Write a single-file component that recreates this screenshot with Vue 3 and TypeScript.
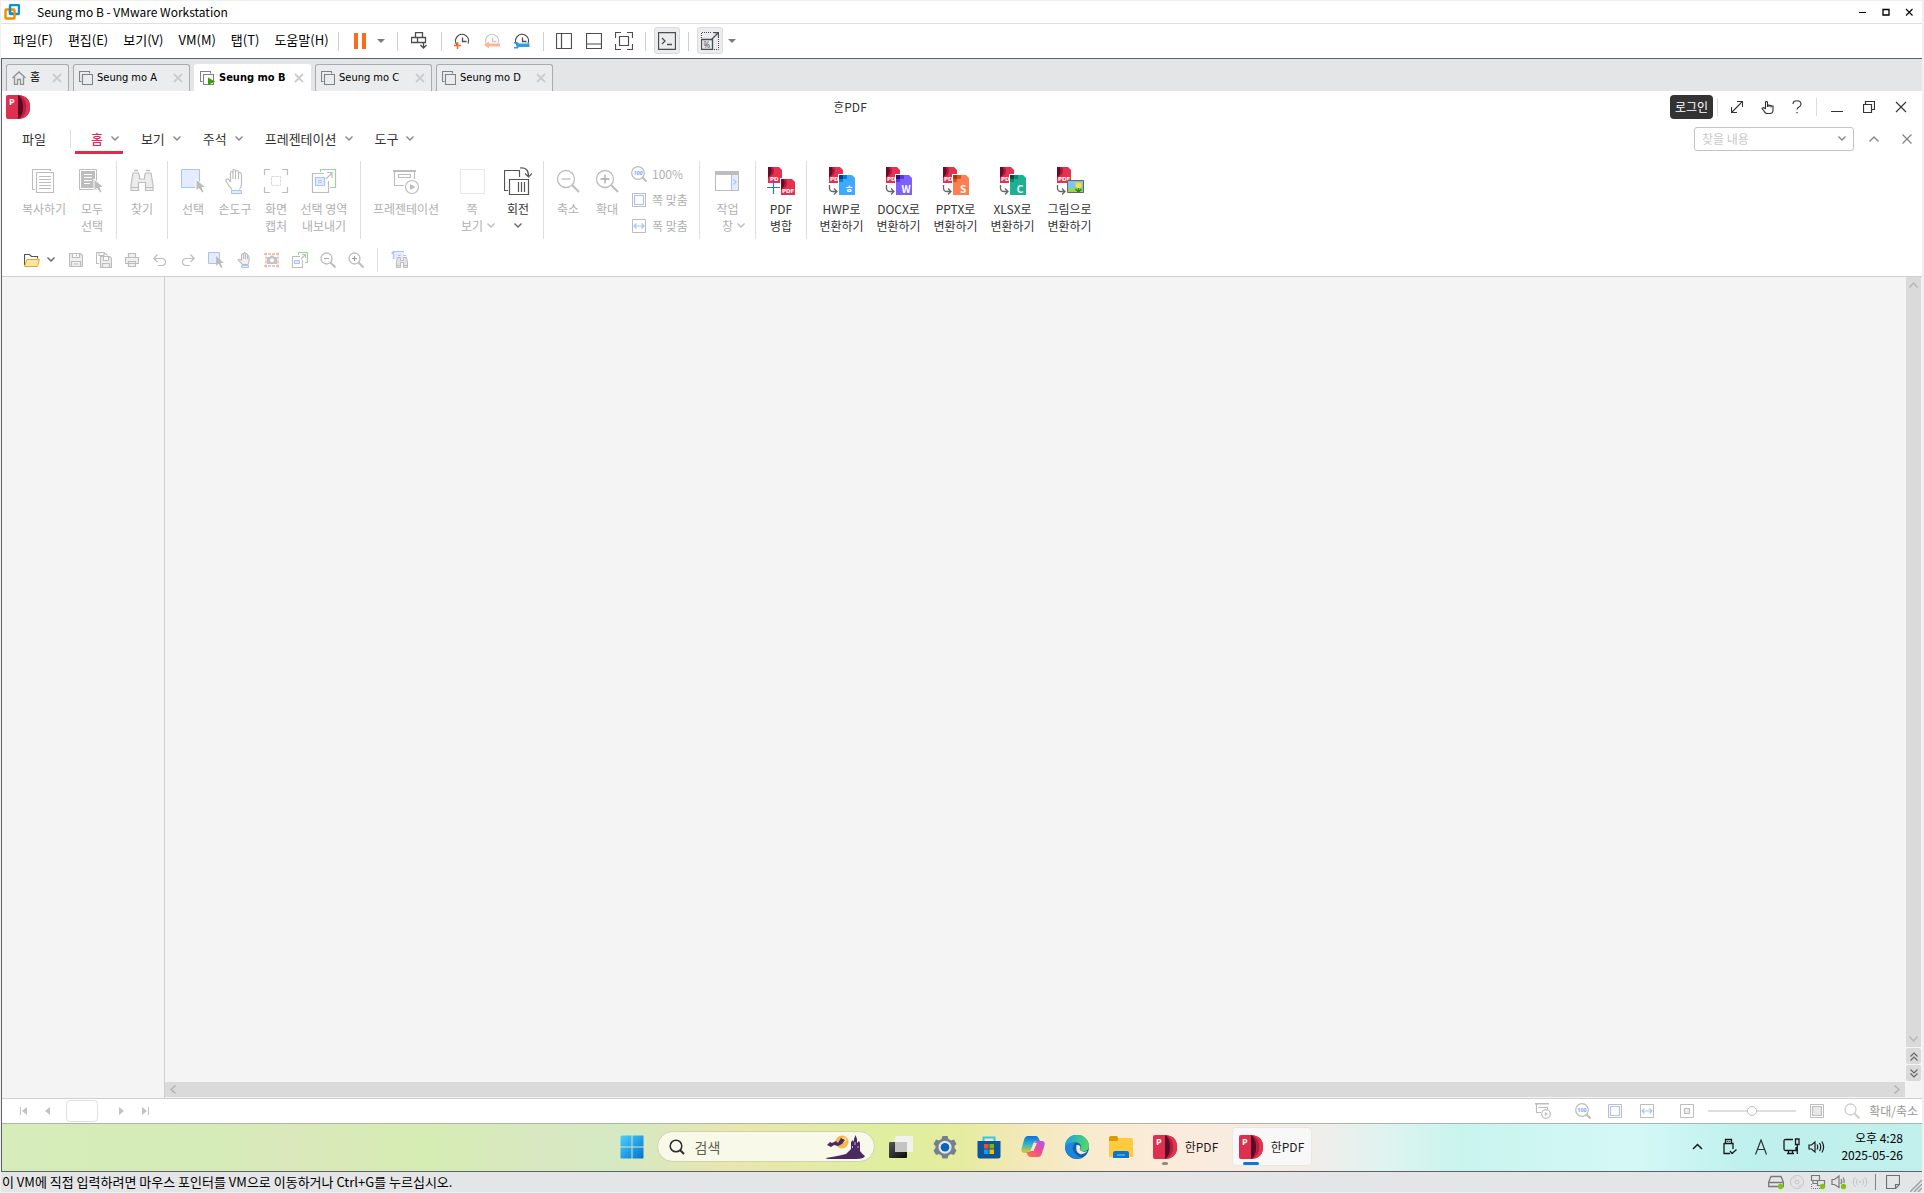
<script setup lang="ts">
import { h } from 'vue'

interface Glyph {
  w: number
  h: number
  body: string
}

interface Tool {
  icon: string
  lines: string[]
  width: number
  active?: boolean
  caret?: boolean
}

const cursor = (x: number, y: number) =>
  `<path transform="translate(${x} ${y})" fill="#bdbdbd" stroke="#fff" d="M0 0V12L3 9.500L6 14L8 13L6 8.500H10Z"/>`

const pdfSheet = (x: number, y: number, tx: number, label = 'PDF') =>
  `<g transform="translate(${x} ${y})"><path fill="#e6304f" d="M0 0H11L14 3V16H0Z"/><path fill="#6b0b27" d="M0 0H3Q6 6 0 11Z"/><path fill="#b01b3c" d="M3 0H5Q8 7 2 10Q5 5 3 0Z"/><text x="${tx}" y="14" font-size="5.500" font-weight="700" font-family="DejaVu Sans" fill="#fff">${label}</text></g>`

const convertIcon = (fill: string, dark: string, mid: string, letter: string) =>
  `${pdfSheet(1, 0, 1)}<path d="M1.500 18V21Q1.500 24.500 5 24.500H9M6 21.500L9 24.500L6 27.500" fill="none" stroke="#666" stroke-width="1.300"/><path fill="#fff" d="M10 7H24L28 11V28H10Z"/><path fill="${fill}" d="M11 8H24L27 11V28H11Z"/><path fill="${dark}" d="M11 8H15V12H11Z"/><path fill="${mid}" d="M15 8H19V12H15ZM11 12H15V15H11Z"/><text x="21" y="26" text-anchor="middle" font-size="10" font-weight="700" font-family="Noto Sans CJK KR" fill="#fff">${letter}</text>`

const pdfApp =
  '<path fill="#8f1734" d="M12 0Q24 1 24 12T12 24Z"/><path fill="#e8304f" d="M13 0Q24 1 24 12T13 24Q20 20 20 12T13 0Z"/><path fill="#b51f40" d="M13 0Q20 4 20 12T13 24Q17 19 17 12T13 0Z"/><path fill="#5d0a25" d="M12 0Q17 4 17 12T12 24Z"/><path fill="#df2f50" d="M2 0H12V24H2Q0 24 0 22V2Q0 0 2 0Z"/><text x="3" y="10" font-size="9" font-weight="700" font-family="Open Sans" fill="#fff">P</text>'

const g = (w: number, h: number, body: string): Glyph => ({ w, h, body })

const line = (stroke: string, d: string, width = 1) =>
  `<path fill="none" stroke="${stroke}" stroke-width="${width}" d="${d}"/>`

const zoomLens = (color: string, inner: string) =>
  `<circle cx="6.500" cy="6.500" r="5.500" fill="none" stroke="${color}" stroke-width="1.300"/>${line(color, 'M10.500 10.500L15.500 15.500', 2)}${inner}`

const clock = (color: string) =>
  line(color, 'M3.500 12.500A6.500 6.500 0 1 1 14 10.500M8.500 4.500V8.500H12.500', 1.3)

const glyphs: Record<string, Glyph> = {
  vmware: g(16, 16, '<rect x="6" y="1" width="9" height="9" rx="1" fill="none" stroke="#0a93cf" stroke-width="2.400"/><rect x="1.500" y="5.500" width="9" height="9" rx="1" fill="none" stroke="#f38b00" stroke-width="2.400"/><path d="M6 4V9.500H9" fill="none" stroke="#0a93cf" stroke-width="2.400"/>'),
  winMin: g(12, 12, line('#000', 'M2 6.500H9')),
  winMax: g(12, 12, line('#000', 'M3 3.500H9V9H3Z', 1.3)),
  winClose: g(12, 12, line('#000', 'M3 3L9.500 9.500M9.500 3L3 9.500', 1.1)),
  caret: g(8, 4, '<path fill="#7b7b7b" d="M0 0H8L4 4Z"/>'),
  pause: g(12, 16, '<path fill="#ff6b1c" d="M0 0H4V16H0ZM8 0H12V16H8Z"/>'),
  sendKeys: g(16, 17, line('#4d4d4f', 'M4.500 .500H11.500V5.500H4.500ZM.500 5.500H6.500V10.500H.500ZM6.500 5.500H14.500V10.500H6.500ZM12.500 11V16M9.500 13L12.500 16L15.500 13', 1.3)),
  snapAdd: g(17, 16, clock('#4d4d4f') + line('#ff6b1c', 'M0 12.500H7M3.500 9V16', 1.6)),
  snapBack: g(17, 16, clock('#c9c9c9') + '<path fill="#ffb493" d="M0 12L5 8.500V10.500H16V13.500H5V15.500Z"/>'),
  snapManage: g(17, 16, clock('#4d4d4f') + '<path fill="#2b9fdd" d="M0 9H3.500L5 10.500H15.500V14H5L3.500 15.500H0V14H2.500V10.500H0Z"/>'),
  paneLeft: g(16, 16, line('#4d4d4f', 'M.500 .500H15.500V15.500H.500ZM5.500 .500V15.500', 1.2)),
  paneBottom: g(16, 16, line('#4d4d4f', 'M.500 .500H15.500V15.500H.500ZM.500 11H15.500', 1.2)),
  fullscreen: g(18, 18, line('#4d4d4f', 'M.500 6V.500H6M12 .500H17.500V6M17.500 12V17.500H12M6 17.500H.500V12M4.500 4.500H13.500V13.500H4.500Z', 1.2)),
  console: g(18, 18, line('#4d4d4f', 'M.500 .500H17.500V17.500H.500Z', 1.3) + line('#4d4d4f', 'M4 6L7 9L4 12M9 12.500H14', 1.3)),
  stretch: g(18, 18, line('#4d4d4f', 'M.500 7.500H11.500V17.500H.500ZM10 8L17 1M12 .500H17.500V6', 1.3) + '<path d="M.500 6V.500H11M17.500 7V17.500H12" fill="none" stroke="#4d4d4f" stroke-dasharray="1 1"/><text x="2.500" y="15.500" font-size="8" font-family="Noto Sans" fill="#555">%</text>'),
  home: g(14, 14, line('#8f9194', 'M.500 7L7 1L13.500 7M2.500 6V13.500H5.500V8.500H8.500V13.500H11.500V6', 1.3)),
  vm: g(14, 14, line('#808285', 'M2.500 10.500H.500V.500H10.500V2.500M3.500 3.500H13.500V13.500H3.500Z', 1.1)),
  vmOn: g(15, 14, line('#808285', 'M2.500 10.500H.500V.500H10.500V2.500M3.500 3.500H13.500V13.500H3.500Z', 1.1) + '<path fill="#3f9c10" d="M8 6.500L15 10.500L8 14Z"/>'),
  tabClose: g(10, 10, line('#cbcccd', 'M1 1L9 9M9 1L1 9', 1.8)),
  pdfApp: g(24, 24, pdfApp),
  expand: g(12, 12, line('#333', 'M1 11L11 1M6 .500H11.500V6M.500 6V11.500H6', 1.1)),
  touch: g(13, 13, line('#333', 'M4.500 8V1.500Q4.500 .500 5.500 .500T6.500 1.500V6M6.500 4H8V6M8 4.500H10V6.500M10 5H12V9Q12 12.500 9 12.500H6Q4 12.500 3 10L1 7.500L2.500 6.500L4.500 8', 1.1)),
  help: g(10, 14, line('#333', 'M1 4Q1 .700 5 .700T9 4Q9 6 7 7T5 9.500', 1.1) + '<path fill="#333" d="M4.400 12H5.600V13.200H4.400Z"/>'),
  minimize: g(12, 12, line('#333', 'M0 10.500H12')),
  restore: g(12, 12, line('#333', 'M.500 3.500H8.500V11.500H.500ZM2.500 3V.500H11.500V8.500H9', 1.2)),
  close: g(12, 12, line('#333', 'M1 1L11 11M11 1L1 11', 1.1)),
  closeGrey: g(12, 12, line('#858585', 'M1.500 1.500L10.500 10.500M10.500 1.500L1.500 10.500', 1.3)),
  down: g(8, 5, line('#858585', 'M.500 .500L4 4L7.500 .500', 1.4)),
  downLight: g(8, 5, line('#bcbcbc', 'M.500 .500L4 4L7.500 .500', 1.4)),
  downDark: g(8, 5, line('#666', 'M.500 .500L4 4L7.500 .500', 1.4)),
  up: g(10, 6, line('#858585', 'M.500 5.500L5 1L9.500 5.500', 1.4)),

  copy: g(28, 28, line('#bdbdbd', 'M5 22.500H2.500V2.500H20.500V4M6.500 5.500H23.500V25.500H6.500ZM9 9.500H21M9 12.500H21M9 15.500H21M9 18.500H21M9 21.500H21', 1.1)),
  selectAll: g(28, 28, '<path fill="#fff" stroke="#bdbdbd" d="M1.500 2.500H18.500V22.500H1.500Z"/><path fill="#bdbdbd" d="M3 4H17V21H3Z"/><path stroke="#fff" d="M6 7.500H14M6 10.500H14M6 13.500H14M6 16.500H12"/>' + cursor(16, 12)),
  find: g(28, 28, '<path fill="#ececec" stroke="#bdbdbd" stroke-width="1.200" d="M5 6H10.500L11.500 9V12H16.500V9L17.500 6H23L25 18V23.500H17.500V15.500H10.500V23.500H3V18ZM3.500 20.500H10M18 20.500H24.500"/><path stroke="#bdbdbd" stroke-width="1.500" d="M6 3.500H10M18 3.500H22"/>'),
  select: g(28, 28, '<path fill="#e5ecff" stroke="#a8c2fb" d="M2.500 2.500H20.500V20.500H2.500Z"/>' + cursor(17, 12)),
  hand: g(28, 28, line('#bdbdbd', 'M9.500 15V6Q9.500 4.500 10.500 4.500T12 6V12M12 6V3.500Q12 2.500 13.200 2.500T14.500 3.500V12M14.500 4.500Q15 3.500 16 3.500T17.500 5V12M17.500 6.500Q18 5.500 19 5.500T20.500 7.500V17Q20.500 20 18.500 22.500M9.500 15L7.500 12.500Q6 11.500 5 12.500Q4.500 13.500 5.500 15L8.500 19.500L11 22.500', 1.2) + '<path fill="#e5ecff" stroke="#a8c2fb" d="M10.500 23.500H20.500V26.500H10.500Z"/>'),
  capture: g(28, 28, line('#bdbdbd', 'M2.500 8V2.500H8M20 2.500H25.500V8M25.500 20V25.500H20M8 25.500H2.500V20', 1.2) + '<path fill="none" stroke="#d8d8d8" stroke-dasharray="3 1" d="M9.500 9.500H18.500V18.500H9.500Z"/>'),
  exportArea: g(28, 28, line('#9fd09f', 'M10.500 5V2.500H25.500V20.500H20', 1.2) + line('#bdbdbd', 'M14 6.500H2.500V25.500H18.500V14M16 12L21.500 6.500M17 5.500H22V11', 1.2) + '<path fill="#e5ecff" stroke="#a8c2fb" stroke-width="1.200" d="M5.500 10.500H14.500V18.500H5.500Z"/><path stroke="#a8c2fb" d="M8 13.500H12M8 15.500H12"/>'),
  present: g(28, 28, '<path fill="#bdbdbd" d="M1 3H24V5H1Z"/>' + line('#bdbdbd', 'M2.500 5V18.500H12M22.500 5V12M6.500 7.500H18.500V10.500H6.500Z', 1.2) + '<circle cx="20" cy="20" r="6.500" fill="#fff" stroke="#bdbdbd" stroke-width="1.200"/><path fill="#bdbdbd" d="M18 17L23.500 20L18 23Z"/>'),
  page: g(28, 28, '<path fill="none" stroke="#cfcfcf" stroke-dasharray="1 1" d="M2.500 2.500H26.500V26.500H2.500Z"/>'),
  rotate: g(28, 28, line('#555', 'M4 23.500H.500V3.500H15.500V10M5.500 12.500H24.500V27.500H5.500ZM14.500 15V25M17.500 15V25M20.500 15V25M16 1Q24.500 0 24.500 9M21 6.500L24.500 10L28 6.500', 1.2)),
  zoomOut: g(28, 28, '<circle cx="12" cy="12" r="8.500" fill="none" stroke="#bdbdbd" stroke-width="1.300"/>' + line('#bdbdbd', 'M7.500 12H16.500', 1.3) + line('#bdbdbd', 'M18 18L25 25', 2)),
  zoomIn: g(28, 28, '<circle cx="12" cy="12" r="8.500" fill="none" stroke="#bdbdbd" stroke-width="1.300"/>' + line('#aaa', 'M7.500 12H16.500M12 7.500V16.500', 1.3) + line('#bdbdbd', 'M18 18L25 25', 2)),
  taskPane: g(28, 28, '<path fill="#e5ecff" d="M18 8H25V23H18Z"/><path fill="#bdbdbd" d="M1 4H25V8H1Z"/>' + line('#bdbdbd', 'M1.500 8V23.500H24.500V8', 1.1) + line('#a8c2fb', 'M17.500 8V23M19.500 12.500L22 15L19.500 17.500', 1.1)),
  merge: g(28, 28, pdfSheet(1, 0, 2, 'PD') + '<path fill="#fff" d="M13 11H26L29 14V28H13Z"/>' + pdfSheet(14, 12, 1) + line('#2a6df0', 'M0 20.500H13M6.500 14V27', 1.2)),
  toHwp: g(28, 28, convertIcon('#3fa9ff', '#00407f', '#0a7be0', 'ㅎ')),
  toDocx: g(28, 28, convertIcon('#7d5fff', '#26117d', '#5a38e0', 'W')),
  toPptx: g(28, 28, convertIcon('#ff7f50', '#a33a10', '#d9551f', 'S')),
  toXlsx: g(28, 28, convertIcon('#1eb092', '#024a3c', '#0b8a70', 'C')),
  toImage: g(28, 28, pdfSheet(1, 0, 1) + line('#666', 'M1.500 18V21Q1.500 24.500 5 24.500H9M6 21.500L9 24.500L6 27.500', 1.3) + '<path fill="#7cc4f2" stroke="#666" d="M11.500 13.500H27.500V25.500H11.500Z"/><path fill="#9bd15a" d="M12 21H27V25H12Z"/><path fill="#ffe22e" d="M19.500 15L21 16.500L22.500 15L24 16.500L25.500 15V18.500Q25.500 21 22.500 21T19.500 18.500Z"/><path stroke="#1d8a1d" stroke-width="1.300" fill="none" d="M22.500 21V25M19.500 22L22.500 25L25.500 22"/>'),

  zoom100: g(16, 16, '<circle cx="7" cy="7" r="6.300" fill="none" stroke="#bdbdbd" stroke-width="1.200"/>' + line('#bdbdbd', 'M11.500 11.500L15.500 15.500', 2) + '<text x="7" y="9" text-anchor="middle" font-size="5.500" font-weight="700" font-family="Open Sans" fill="#7fa6ff">100</text>'),
  fitPage: g(14, 14, line('#bdbdbd', 'M.500 .500H13.500V13.500H.500Z') + line('#a8c2fb', 'M2.500 2.500H11.500V11.500H2.500Z', 1.2)),
  fitWidth: g(14, 14, line('#bdbdbd', 'M.500 .500H13.500V13.500H.500Z') + line('#a8c2fb', 'M2 7H12M4.500 4.500L2 7L4.500 9.500M9.500 4.500L12 7L9.500 9.500', 1.2)),

  open: g(16, 14, line('#555', 'M.500 12V1.500H5.500L7.500 3.500H13.500V5.500', 1.2) + '<path fill="#ffe4a0" stroke="#e5a823" d="M3 6.500H15.500L13.500 13.500H.500Z"/>'),
  save: g(14, 14, '<path fill="#efefef" stroke="#bdbdbd" stroke-width="1.200" d="M.500 .500H11.500L13.500 2.500V13.500H.500ZM3.500 .500V4.500H10.500V.500M2.500 13.500V8.500H11.500V13.500M5 11H9M7.500 1.500V3.500"/>'),
  saveAll: g(16, 16, line('#bdbdbd', 'M3 11.500H.500V.500H8L11.500 3.500M3 .500V3.500H8V.500', 1.1) + '<path fill="#efefef" stroke="#bdbdbd" stroke-width="1.200" d="M4.500 4.500H13.500L15.500 6.500V15.500H4.500ZM7.500 4.500V8.500H12.500V4.500M6.500 15.500V11.500H13.500V15.500"/>'),
  print: g(14, 14, '<path fill="#efefef" stroke="#bdbdbd" stroke-width="1.200" d="M.500 4.500H13.500V10.500H.500ZM3.500 4.500V.500H10.500V4.500M3.500 8.500H10.500V13.500H3.500Z"/>'),
  undo: g(14, 12, line('#bdbdbd', 'M1 4.500H8.500Q12.500 4.500 12.500 8T8.500 11.500H5M4.500 .500L.800 4.500L4.500 8', 1.2)),
  redo: g(14, 12, line('#bdbdbd', 'M13 4.500H5.500Q1.500 4.500 1.500 8T5.500 11.500H9M9.500 .500L13.200 4.500L9.500 8', 1.2)),
  selectSm: g(16, 16, '<path fill="#e5ecff" stroke="#a8c2fb" d="M.500 .500H11.500V11.500H.500Z"/><path fill="#bdbdbd" d="M8 4V14L10.500 11.500L13 16L14.500 15L12.500 11H16Z"/>'),
  handSm: g(14, 16, '<path fill="#efefef" stroke="#bdbdbd" stroke-width="1.100" d="M4.500 8V3Q5.500 1 6.500 2Q7.500 -.500 8.500 1.500Q10 1 10.500 3Q12 3 12 5V10L11 12.500H5.500L1 8Q2 6.500 4.500 8ZM6.500 2.500V7M8.500 2V7M10.500 3.500V7"/><path fill="#e5ecff" stroke="#a8c2fb" d="M4.500 13.500H11.500V15.500H4.500Z"/>'),
  camera: g(16, 16, '<path fill="none" stroke="#f2b3a6" stroke-dasharray="3 1" stroke-width="1.300" d="M2 .500V15.500M14 .500V15.500M0 2H16M0 14H16"/><path fill="#c4c4c4" d="M3 5H5.500L6.500 3.500H9.500L10.500 5H13V12H3Z"/><circle cx="8" cy="8.300" r="2" fill="#fff"/>'),
  exportSm: g(16, 16, line('#9fd09f', 'M6.500 3V.500H15.500V10.500H13', 1.2) + line('#bdbdbd', 'M8 4.500H.500V15.500H10.500V8M9 7L13 3M10 2.500H13.500V6', 1.1) + '<path fill="#e5ecff" stroke="#a8c2fb" d="M2.500 8.500H7.500V11.500H2.500Z"/>'),
  zoomOutSm: g(16, 16, zoomLens('#bdbdbd', line('#aaa', 'M4 6.500H9', 1.2))),
  zoomInSm: g(16, 16, zoomLens('#bdbdbd', line('#999', 'M4 6.500H9M6.500 4V9', 1.2))),
  findSm: g(17, 17, '<path fill="#e5ecff" d="M2 0H13V8H2Z"/>' + line('#a8c2fb', 'M.500 2.500L2.500 .500H13M2.500 0V8', 1.2) + '<path stroke="#bdbdbd" d="M7 4.500H9.500M12.500 4.500H15"/><path fill="#e4e4e4" stroke="#bdbdbd" d="M6.500 6.500H9.500V9.500H12.500V6.500H15.500L16.500 11V16.500H12.500V11.500H9.500V16.500H5.500V11ZM5.500 14.500H9.500M12.500 14.500H16.500"/>'),

  first: g(8, 8, '<path fill="#c2c2c2" d="M0 0H1V8H0ZM7 0V8L2 4Z"/>'),
  prev: g(6, 8, '<path fill="#c2c2c2" d="M5 0V8L0 4Z"/>'),
  next: g(6, 8, '<path fill="#c2c2c2" d="M0 0V8L5 4Z"/>'),
  last: g(8, 8, '<path fill="#c2c2c2" d="M6 0H7V8H6ZM0 0V8L5 4Z"/>'),
  presentSm: g(16, 16, '<path fill="#bdbdbd" d="M0 0H14V1.500H0Z"/>' + line('#bdbdbd', 'M1.500 1V9.500H6M3.500 4.500H12.500V6', 1.2) + '<circle cx="11" cy="11" r="4.300" fill="#fff" stroke="#bdbdbd" stroke-width="1.200"/><path fill="#bdbdbd" d="M9.800 9L13 11L9.800 13Z"/>'),
  pageSmall: g(14, 14, line('#bdbdbd', 'M.500 .500H13.500V13.500H.500Z') + '<path fill="#efefef" stroke="#bdbdbd" stroke-width="1.200" d="M4.500 4.500H9.500V9.500H4.500Z"/>'),
  pageLarge: g(14, 14, line('#bdbdbd', 'M.500 .500H13.500V13.500H.500Z') + '<path fill="#e8e8e8" stroke="#bdbdbd" stroke-width="1.200" d="M2.500 2.500H11.500V11.500H2.500Z"/>'),
  lens: g(16, 16, zoomLens('#cfcfcf', '')),
  chevUp: g(9, 6, line('#b5b5b5', 'M.500 5.500L4.500 1L8.500 5.500', 1.3)),
  chevDown: g(9, 6, line('#b5b5b5', 'M.500 .500L4.500 5L8.500 .500', 1.3)),
  chevLeft: g(6, 9, line('#b0b0b0', 'M5.500 .500L1 4.500L5.500 8.500', 1.3)),
  chevRight: g(6, 9, line('#b0b0b0', 'M.500 .500L5 4.500L.500 8.500', 1.3)),
  dblUp: g(8, 9, line('#666', 'M.500 4.500L4 1L7.500 4.500M.500 8.500L4 5L7.500 8.500', 1.2)),
  dblDown: g(8, 9, line('#666', 'M.500 .500L4 4L7.500 .500M.500 4.500L4 8L7.500 4.500', 1.2)),

  windows: g(24, 24, '<defs><linearGradient id="wg" x1="0" y1="0" x2="1" y2="1"><stop offset="0" stop-color="#4cd0fb"/><stop offset="1" stop-color="#0073d1"/></linearGradient></defs><path fill="url(#wg)" d="M1.500 .500H11.500V11.500H.500V1.500ZM12.500 .500H23L23.500 1V11.500H12.500ZM.500 12.500H11.500V23.500H1L.500 23ZM12.500 12.500H23.500V23L23 23.500H12.500Z"/>'),
  search: g(16, 16, '<circle cx="7" cy="7" r="5.800" fill="none" stroke="#2b2b2b" stroke-width="1.500"/><path d="M11 11L15 15" stroke="#2b2b2b" stroke-width="2"/>'),
  castle: g(40, 24, '<circle cx="16" cy="7" r="6.500" fill="#f7b64a"/><circle cx="18" cy="5" r="2.500" fill="#ffe08a"/><path fill="#4b2a63" d="M1 10L4 7L6 8L10 6L12 8L15 3L19 5L16 9L12 11L8 10L5 12ZM0 23Q12 21 20 19Q24 15 25 14V7L27 5L28 7V4L29.500 0L31 4V8L33 6L34 8V16Q37 20 39 21Q38 24 30 24H4Q0 24 0 23Z"/><path fill="#c9a6d8" d="M28.500 7H29.500V10H28.500ZM26 11H27V13H26ZM31.500 11H32.500V13H31.500Z"/>'),
  taskView: g(24, 22, '<defs><linearGradient id="tv" x1="0" y1="0" x2="1" y2="1"><stop offset="0" stop-color="#555"/><stop offset="1" stop-color="#0b0b0b"/></linearGradient></defs><rect y="6" width="18" height="16" rx="1" fill="url(#tv)"/><rect x="6" width="18" height="16" rx="1" fill="#f1f1f1" opacity=".95"/><path fill="#c4c4c4" d="M6 6H18V16H6Z"/>'),
  settings: g(24, 24, '<path fill="#74808c" d="M9.500 1H14.500L15.500 4L18 5.500L21 4.500L23.500 9L21.500 11V13L23.500 15.500L21 20L18 19L15.500 20.500L14.500 23.500H9.500L8.500 20.500L6 19L3 20L.500 15.500L2.500 13V11L.500 9L3 4.500L6 5.500L8.500 4Z"/><circle cx="12" cy="12.200" r="6.500" fill="#e3e8ec"/><circle cx="12" cy="12.200" r="4.300" fill="#0a63bd"/>'),
  store: g(24, 24, '<path d="M6.500 7V2.500H17.500V7" fill="none" stroke="#36c3f2" stroke-width="2"/><path fill="#0f559b" d="M.500 6H23.500V21Q23.500 23.500 21 23.500H3Q.500 23.500 .500 21Z"/><path fill="#f25022" d="M7 9H11.500V13.500H7Z"/><path fill="#7fba00" d="M12.500 9H17V13.500H12.500Z"/><path fill="#00a4ef" d="M7 14.500H11.500V19H7Z"/><path fill="#ffb900" d="M12.500 14.500H17V19H12.500Z"/>'),
  copilot: g(24, 24, '<defs><linearGradient id="ca" x1="0" y1="0" x2="0" y2="1"><stop offset="0" stop-color="#0d6fe0"/><stop offset=".5" stop-color="#2fb7c9"/><stop offset="1" stop-color="#f2c81c"/></linearGradient><linearGradient id="cb" x1="1" y1="0" x2="0" y2="1"><stop offset="0" stop-color="#a855f7"/><stop offset=".5" stop-color="#ec4f8f"/><stop offset="1" stop-color="#ff7a3c"/></linearGradient></defs><path fill="url(#ca)" d="M7 1H15Q17 1 18 4L19 6H15Q13 6 12 9L10 15Q9 18 7 18H3Q-1 18 1 12L3 5Q4 1 7 1Z"/><path fill="url(#cb)" d="M17 22H9Q7 22 6 19L5.500 17H8Q10 17 11 14L13 8Q14 6 16 6H21Q25 6 23 12L21 18Q20 22 17 22Z"/><path fill="#f5ead0" d="M13 8H16L12.500 16H9.500Z"/>'),
  edge: g(24, 24, '<defs><linearGradient id="ea" x1="0" y1="0" x2="1" y2=".3"><stop offset="0" stop-color="#1a9be6"/><stop offset="1" stop-color="#4fd86b"/></linearGradient></defs><circle cx="12" cy="12" r="12" fill="#0c60b5"/><path fill="url(#ea)" d="M0 12A12 12 0 0 1 24 11Q24 16 19 16Q15 16 15 14Q17 12 15 9Q12 6 7 8Q2 10 0 12Z"/><path fill="#1d86d8" d="M0 12Q3 6 10 8Q7 11 8 15Q10 21 17 22.500Q12 25 6 22Q0 18 0 12Z"/><path fill="#f7e9d4" d="M11.500 10Q15 9.500 15.500 12Q14 14 15.500 15.500Q18 17.500 22.500 16Q19 20 15 19Q10 17 11.500 10Z"/>'),
  explorer: g(24, 22, '<path fill="#d99c09" d="M0 2Q0 0 2 0H8L10 3V6H0Z"/><path fill="#ffcb3d" d="M0 5H8L10 2H22Q24 2 24 4V21H0Z"/><path fill="#0f74c9" d="M4 22V17Q4 15 6 15H18Q20 15 20 17V22Z"/><path fill="#3aa0e8" d="M8 18H16V20H8Z"/>'),
  trayUp: g(11, 7, line('#1a1a1a', 'M1 6L5.500 1.500L10 6', 1.5)),
  usb: g(14, 17, line('#1a1a1a', 'M2.500 5V1.500H8.500V5M1 5.500H10V11M1 5V15.500H7M4.500 3V3.800M6.500 3V3.800M7 13L9 15.500L13.500 11.500', 1.3)),
  ime: g(14, 16, line('#333', 'M1.500 15.500L7 1L12.500 15.500M3.500 10.500H10.500', 1.2)),
  network: g(17, 17, line('#1a1a1a', 'M10 1.500H2.500Q1 1.500 1 3V11Q1 12.500 2.500 12.500H13V9M4 15.500H11M5.500 12.500V15.500M9.500 12.500V15.500M12.500 1H16V6.500H12.500ZM14.300 6.500V16', 1.3)),
  volume: g(17, 14, line('#1a1a1a', 'M1 5H3.500L7 2V12L3.500 9H1ZM9 4.500Q10.500 7 9 9.500M11.500 3Q14 7 11.500 11M13.800 1.500Q17.500 7 13.800 12.500', 1.2)),
  disk: g(16, 16, line('#77797c', 'M.700 8L3 2.500H13L15.300 8V12.500H.700ZM.700 8.500H15.300', 1.3) + '<circle cx="12.500" cy="12.500" r="2.700" fill="#7cc516"/>'),
  disc: g(16, 16, '<circle cx="8" cy="8" r="6.500" fill="none" stroke="#c3c5c7"/><circle cx="8" cy="8" r="2" fill="none" stroke="#c3c5c7"/>' + line('#c3c5c7', 'M4 5.500Q5 4 6.500 3.500M12 10.500Q11 12 9.500 12.500')),
  nic: g(16, 16, line('#77797c', 'M1.500 1.500H9.500V6.500H1.500ZM7.500 6.500H14.500V11.500H7.500ZM3 6.500V9.500H7', 1.2) + '<path d="M1.500 10V14.500H10" fill="none" stroke="#77797c" stroke-dasharray="1 1"/><circle cx="12.500" cy="12.500" r="2.700" fill="#7cc516"/>'),
  sound: g(16, 16, line('#77797c', 'M1 5.500H3.500L8 2V13.500L3.500 10.500H1ZM10 5Q11.500 7.500 10 10M12 3.500Q14 6.500 13 9', 1.2) + '<circle cx="12.500" cy="12.500" r="2.700" fill="#7cc516"/>'),
  wireless: g(16, 16, line('#c3c5c7', 'M3.500 3Q-1 8 3.500 13M5.500 5Q3 8 5.500 11M12.500 3Q17 8 12.500 13M10.500 5Q13 8 10.500 11') + '<circle cx="8" cy="8" r="1" fill="#c3c5c7"/>'),
  note: g(14, 14, line('#6d6f72', 'M.500 .500H13.500V9.500L9.500 13.500H.500ZM9.500 13V9.500H13', 1.2)),
  grip: g(12, 12, line('#9c9ea1', 'M0 12L12 0M4 12L12 4M8 12L12 8', 1.4)),
}

const menus = ['파일(F)', '편집(E)', '보기(V)', 'VM(M)', '탭(T)', '도움말(H)']

const vmTools: string[][] = [['sendKeys'], ['snapAdd', 'snapBack', 'snapManage'], ['paneLeft', 'paneBottom', 'fullscreen']]

const vmTabs = [
  { name: 'Seung mo A', on: false },
  { name: 'Seung mo B', on: true },
  { name: 'Seung mo C', on: false },
  { name: 'Seung mo D', on: false },
]

const ribbonTabs = ['홈', '보기', '주석', '프레젠테이션', '도구']

const groupsLeft: { cls: string; tools: Tool[] }[] = [
  { cls: 'lead', tools: [{ icon: 'copy', lines: ['복사하기'], width: 48 }, { icon: 'selectAll', lines: ['모두', '선택'], width: 48 }] },
  { cls: '', tools: [{ icon: 'find', lines: ['찾기'], width: 50 }] },
  {
    cls: 'pad-area',
    tools: [
      { icon: 'select', lines: ['선택'], width: 42 },
      { icon: 'hand', lines: ['손도구'], width: 42 },
      { icon: 'capture', lines: ['화면', '캡처'], width: 40 },
      { icon: 'exportArea', lines: ['선택 영역', '내보내기'], width: 56 },
    ],
  },
  {
    cls: 'pad',
    tools: [
      { icon: 'present', lines: ['프레젠테이션'], width: 82 },
      { icon: 'page', lines: ['쪽', '보기'], width: 50, caret: true },
      { icon: 'rotate', lines: ['회전', ''], width: 42, active: true, caret: true },
    ],
  },
]

const zoomTools: Tool[] = [
  { icon: 'zoomOut', lines: ['축소'], width: 40 },
  { icon: 'zoomIn', lines: ['확대'], width: 38 },
]

const zoomRows = [
  { icon: 'zoom100', text: '100%' },
  { icon: 'fitPage', text: '쪽 맞춤' },
  { icon: 'fitWidth', text: '폭 맞춤' },
]

const groupsRight: { cls: string; tools: Tool[] }[] = [
  { cls: '', tools: [{ icon: 'taskPane', lines: ['작업', '창'], width: 55, caret: true }] },
  { cls: '', tools: [{ icon: 'merge', lines: ['PDF', '병합'], width: 50, active: true }] },
  {
    cls: 'pad last',
    tools: [
      { icon: 'toHwp', lines: ['HWP로', '변환하기'], width: 57, active: true },
      { icon: 'toDocx', lines: ['DOCX로', '변환하기'], width: 57, active: true },
      { icon: 'toPptx', lines: ['PPTX로', '변환하기'], width: 57, active: true },
      { icon: 'toXlsx', lines: ['XLSX로', '변환하기'], width: 57, active: true },
      { icon: 'toImage', lines: ['그림으로', '변환하기'], width: 57, active: true },
    ],
  },
]

const quick = ['save', 'saveAll', 'print', 'undo', 'redo', 'selectSm', 'handSm', 'camera', 'exportSm', 'zoomOutSm', 'zoomInSm']
const pinned = ['taskView', 'settings', 'store', 'copilot', 'edge', 'explorer']
const devices = ['disk', 'disc', 'nic', 'sound', 'wireless']

const Icon = (props: { name: string }) => {
  const item = glyphs[props.name]
  return h('svg', {
    width: item.w,
    height: item.h,
    viewBox: `0 0 ${item.w} ${item.h}`,
    'aria-hidden': 'true',
    innerHTML: item.body,
  })
}
Icon.props = ['name']
</script>

<template>
  <div class="host">
    <header class="host-title">
      <Icon name="vmware" />
      <h1>Seung mo B - VMware Workstation</h1>
      <button aria-label="최소화"><Icon name="winMin" /></button>
      <button aria-label="최대화"><Icon name="winMax" /></button>
      <button aria-label="닫기"><Icon name="winClose" /></button>
    </header>

    <div class="menu-bar">
      <nav class="menus">
        <button v-for="m in menus" :key="m">{{ m }}</button>
      </nav>
      <div class="vm-group power">
        <button aria-label="일시 중지"><Icon name="pause" /></button>
        <button aria-label="전원 메뉴"><Icon name="caret" /></button>
      </div>
      <div v-for="(group, i) in vmTools" :key="i" class="vm-group">
        <button v-for="t in group" :key="t" class="vm-tool" :aria-label="t"><Icon :name="t" /></button>
      </div>
      <div class="vm-group">
        <button class="pressed" aria-label="콘솔"><Icon name="console" /></button>
      </div>
      <div class="vm-group">
        <button class="pressed" aria-label="늘이기"><Icon name="stretch" /></button>
        <button class="side-caret" aria-label="늘이기 메뉴"><Icon name="caret" /></button>
      </div>
    </div>

    <main class="guest">
      <div class="vm-tabs" role="tablist">
        <div class="vm-tab home" role="tab">
          <Icon name="home" /><span>홈</span><button aria-label="탭 닫기"><Icon name="tabClose" /></button>
        </div>
        <div v-for="t in vmTabs" :key="t.name" class="vm-tab" :class="{ on: t.on }" role="tab">
          <Icon :name="t.on ? 'vmOn' : 'vm'" /><span>{{ t.name }}</span>
          <button aria-label="탭 닫기"><Icon name="tabClose" /></button>
        </div>
      </div>

      <section class="pdf">
        <div class="pdf-title">
          <Icon name="pdfApp" />
          <h2>ᄒᆞᆫPDF</h2>
          <button class="login">로그인</button>
          <span class="rule near"></span>
          <button aria-label="전체 화면"><Icon name="expand" /></button>
          <button aria-label="터치"><Icon name="touch" /></button>
          <button aria-label="도움말"><Icon name="help" /></button>
          <span class="rule far"></span>
          <button class="wide" aria-label="최소화"><Icon name="minimize" /></button>
          <button class="wide" aria-label="이전 크기"><Icon name="restore" /></button>
          <button class="wide" aria-label="닫기"><Icon name="close" /></button>
        </div>

        <div class="ribbon-tabs">
          <button class="file">파일</button>
          <button v-for="(t, i) in ribbonTabs" :key="t" class="rtab" :class="{ current: i === 0 }">
            {{ t }}<Icon name="down" />
          </button>
          <div class="find-box">
            <input type="text" placeholder="찾을 내용" aria-label="찾을 내용" />
            <button aria-label="최근 검색"><Icon name="down" /></button>
          </div>
          <button class="fold" aria-label="리본 접기"><Icon name="up" /></button>
          <button class="shut" aria-label="문서 닫기"><Icon name="closeGrey" /></button>
        </div>

        <div class="ribbon">
          <div v-for="(group, i) in groupsLeft" :key="i" class="group" :class="group.cls">
            <button v-for="t in group.tools" :key="t.icon" class="tool" :class="{ active: t.active }" :style="{ width: t.width + 'px' }">
              <Icon :name="t.icon" />
              <span v-for="(l, n) in t.lines" :key="n" :class="{ drop: t.caret && n === 1 && l }">{{ l }}<Icon v-if="t.caret && n === 1" :name="t.active ? 'downDark' : 'downLight'" /></span>
            </button>
          </div>
          <div class="group pad">
            <button v-for="t in zoomTools" :key="t.icon" class="tool" :style="{ width: t.width + 'px' }">
              <Icon :name="t.icon" />
              <span v-for="l in t.lines" :key="l">{{ l }}</span>
            </button>
            <div class="zoom-rows">
              <button v-for="r in zoomRows" :key="r.text"><i><Icon :name="r.icon" /></i>{{ r.text }}</button>
            </div>
          </div>
          <div v-for="(group, i) in groupsRight" :key="'r' + i" class="group" :class="group.cls">
            <button v-for="t in group.tools" :key="t.icon" class="tool" :class="{ active: t.active }" :style="{ width: t.width + 'px' }">
              <Icon :name="t.icon" />
              <span v-for="(l, n) in t.lines" :key="n" :class="{ drop: t.caret && n === 1 && l }">{{ l }}<Icon v-if="t.caret && n === 1" name="downLight" /></span>
            </button>
          </div>
        </div>

        <div class="quick">
          <button class="open" aria-label="열기"><Icon name="open" /></button>
          <button class="more" aria-label="최근 문서"><Icon name="downDark" /></button>
          <button v-for="q in quick" :key="q" :aria-label="q"><Icon :name="q" /></button>
          <span class="rule"></span>
          <button aria-label="고급 찾기"><Icon name="findSm" /></button>
        </div>

        <div class="work">
          <aside class="thumbs"></aside>
          <div class="doc">
            <div class="canvas"></div>
            <div class="hscroll"><Icon name="chevLeft" /><Icon name="chevRight" /></div>
          </div>
          <div class="vside">
            <div class="vscroll"><Icon name="chevUp" /><Icon name="chevDown" /></div>
            <button aria-label="이전 쪽"><Icon name="dblUp" /></button>
            <button aria-label="다음 쪽"><Icon name="dblDown" /></button>
          </div>
        </div>

        <footer class="pdf-status">
          <button aria-label="처음 쪽"><Icon name="first" /></button>
          <button aria-label="이전 쪽"><Icon name="prev" /></button>
          <input class="page-no" type="text" aria-label="쪽 번호" />
          <button aria-label="다음 쪽"><Icon name="next" /></button>
          <button aria-label="마지막 쪽"><Icon name="last" /></button>
          <div class="status-right">
            <button class="gap" aria-label="프레젠테이션"><Icon name="presentSm" /></button>
            <button aria-label="100%"><Icon name="zoom100" /></button>
            <button aria-label="쪽 맞춤"><Icon name="fitPage" /></button>
            <button class="gap" aria-label="폭 맞춤"><Icon name="fitWidth" /></button>
            <button aria-label="축소"><Icon name="pageSmall" /></button>
            <input class="slider" type="range" min="0" max="100" value="50" aria-label="배율" />
            <button aria-label="확대"><Icon name="pageLarge" /></button>
            <Icon name="lens" />
            <span>확대/축소</span>
          </div>
        </footer>
      </section>

      <div class="taskbar">
        <div class="tray-space"></div>
        <div class="apps">
          <button class="app" aria-label="시작"><Icon name="windows" /></button>
          <label class="search">
            <Icon name="search" />
            <input type="text" placeholder="검색" aria-label="검색" />
            <Icon name="castle" />
          </label>
          <button v-for="p in pinned" :key="p" class="app" :aria-label="p"><Icon :name="p" /></button>
          <button class="window"><Icon name="pdfApp" />한PDF</button>
          <button class="window focused"><Icon name="pdfApp" />한PDF</button>
        </div>
        <div class="tray">
          <button class="t1" aria-label="숨겨진 아이콘"><Icon name="trayUp" /></button>
          <button class="t2" aria-label="USB"><Icon name="usb" /></button>
          <button class="t2" aria-label="입력기"><Icon name="ime" /></button>
          <button class="t3" aria-label="네트워크"><Icon name="network" /></button>
          <button class="t3" aria-label="볼륨"><Icon name="volume" /></button>
          <time>오후 4:28<br />2025-05-26</time>
        </div>
      </div>
    </main>

    <footer class="host-status">
      <p>이 VM에 직접 입력하려면 마우스 포인터를 VM으로 이동하거나 Ctrl+G를 누르십시오.</p>
      <i v-for="d in devices" :key="d"><Icon :name="d" /></i>
      <span class="rule"></span>
      <i><Icon name="note" /></i>
      <Icon class="grip" name="grip" />
    </footer>
  </div>
</template>

<style>
body {
  margin: 0;
  background: #f0f0f0;
}
</style>

<style scoped>
.host {
  display: flex;
  flex-direction: column;
  min-height: 100vh;
  box-sizing: border-box;
  padding: 1px 2px 1px 1px;
  font: 12px/16px "Noto Sans CJK KR", sans-serif;
  color: #000;
  white-space: nowrap;
}

.host * {
  box-sizing: border-box;
}

svg {
  display: block;
  flex: none;
}

button {
  display: flex;
  align-items: center;
  justify-content: center;
  margin: 0;
  padding: 0;
  border: 0;
  background: none;
  color: inherit;
  font: inherit;
  white-space: nowrap;
}

h1,
h2,
p {
  margin: 0;
  font: inherit;
}

.rule {
  width: 1px;
  height: 18px;
  background: #dcdcdc;
}

.host-title {
  display: flex;
  align-items: center;
  height: 23px;
  padding: 0 2px 1px 3px;
  background: #fff;
  border-bottom: 1px solid #e0e0e0;
}

.host-title h1 {
  flex: 1;
  padding-left: 17px;
}

.host-title button {
  width: 23px;
}

.menu-bar {
  display: flex;
  align-items: center;
  height: 34px;
  padding-bottom: 1px;
  background: #fff;
}

.menus {
  display: flex;
  flex: 0 0 337px;
  gap: 15px;
  padding: 0 0 2px 12px;
  font-size: 13px;
}

.vm-group {
  display: flex;
  align-items: center;
  justify-content: center;
  position: relative;
  height: 26px;
  padding: 0 6px;
}

.vm-group::before {
  content: "";
  position: absolute;
  left: 0;
  top: 4px;
  width: 1px;
  height: 19px;
  background: #cfcfcf;
}

.vm-group.power {
  gap: 11px;
  padding: 0 12px 0 16px;
}

.vm-tool {
  width: 30px;
}

.power + .vm-group {
  padding: 0 7px;
}

.pressed {
  width: 26px;
  height: 27px;
  margin: 0 2px 0 3px;
  border: 1px solid #dadbdc;
  border-radius: 3px;
  background: #ebeced;
}

.side-caret {
  width: 14px;
}

.guest {
  display: flex;
  flex: 1;
  flex-direction: column;
  border: solid #606266;
  border-width: 1px 0 1px 1px;
}

.vm-tabs {
  display: flex;
  gap: 4px;
  height: 32px;
  padding: 5px 4px 0;
  background: #e4e5e7;
}

.vm-tab {
  display: flex;
  align-items: center;
  width: 117px;
  padding: 0 6px 0 5px;
  border: 1px solid #a9abae;
  border-bottom: 0;
  border-radius: 3px 3px 0 0;
  background: #ebeced;
  font: 11px/16px "DejaVu Sans Condensed", "Noto Sans CJK KR", sans-serif;
}

.vm-tab span {
  flex: 1;
  padding-left: 4px;
}

.vm-tab.home {
  width: 63px;
}

.vm-tab.on {
  border-color: #fff;
  background: #fff;
  font-weight: 700;
}

.pdf {
  display: flex;
  flex: 1;
  flex-direction: column;
  background: #fff;
  color: #333;
}

.pdf-title {
  display: flex;
  align-items: center;
  height: 32px;
  padding: 0 5px 0 4px;
}

.pdf-title h2 {
  flex: 1;
  text-align: center;
}

.pdf-title button {
  width: 30px;
}

.pdf-title .wide {
  width: 32px;
}

.pdf-title .login {
  width: 43px;
  height: 24px;
  border-radius: 4px;
  background: #333;
  color: #fff;
}

.pdf-title .near,
.pdf-title .far {
  margin: 0 4px;
}

.ribbon-tabs {
  display: flex;
  align-items: center;
  gap: 22px;
  height: 31px;
  padding: 0 9px 0 20px;
  font-size: 13px;
}

.file {
  position: relative;
  margin-right: 23px;
}

.file::after {
  content: "";
  position: absolute;
  right: -25px;
  width: 1px;
  height: 18px;
  background: #dcdcdc;
}

.rtab {
  position: relative;
  gap: 8px;
  height: 31px;
}

.rtab.current {
  color: #e5294d;
  font-weight: 500;
}

.rtab.current::after {
  content: "";
  position: absolute;
  right: -4px;
  bottom: 0;
  left: -16px;
  height: 3px;
  background: #e5294d;
}

.find-box {
  display: flex;
  width: 160px;
  height: 24px;
  margin-left: auto;
  border: 1px solid #c4c4c4;
  border-radius: 3px;
}

.find-box input {
  flex: 1;
  min-width: 0;
  padding: 0 7px;
  border: 0;
  background: none;
  font: inherit;
  font-size: 12px;
}

.find-box input::placeholder {
  color: #c9c9c9;
  opacity: 1;
}

.find-box button {
  width: 22px;
}

.fold {
  width: 10px;
  margin-left: -7px;
}

.shut {
  width: 12px;
}

.ribbon {
  display: flex;
  height: 78px;
  margin-top: 7px;
}

.group {
  display: flex;
  border-right: 1px solid #dedede;
}

.group.lead {
  padding-left: 18px;
}

.group.pad {
  padding: 0 4px;
}

.group.pad-area {
  padding: 0 8px 0 4px;
}

.group.last {
  padding-left: 6px;
  border: 0;
}

.tool {
  flex-direction: column;
  justify-content: flex-start;
  padding-top: 6px;
  color: #b0b0b0;
}

.tool > svg {
  margin-bottom: 5px;
}

.tool span {
  display: flex;
  align-items: center;
  gap: 4px;
  height: 17px;
  line-height: 17px;
}

.tool .drop {
  padding-left: 12px;
}

.tool.active {
  color: #333;
}

.zoom-rows {
  display: flex;
  flex-direction: column;
  width: 69px;
  padding-left: 5px;
  color: #b0b0b0;
}

.zoom-rows button {
  justify-content: flex-start;
  height: 26px;
}

.zoom-rows i {
  display: flex;
  justify-content: center;
  width: 16px;
  margin-right: 5px;
}

.quick {
  display: flex;
  align-items: center;
  height: 38px;
  padding: 5px 0 1px 18px;
  border-bottom: 1px solid #cfcfcf;
}

.quick button {
  width: 28px;
}

.quick .open {
  width: 24px;
}

.quick .more {
  width: 14px;
  margin-right: 4px;
}

.quick .rule {
  height: 24px;
  margin: 0 7px;
}

.work {
  display: flex;
  flex: 1;
  padding: 0 1px 1px 0;
  background: #f4f4f4;
}

.thumbs {
  width: 163px;
  margin-bottom: -1px;
  border-right: 1px solid #cfcfcf;
}

.doc {
  display: flex;
  flex: 1;
  flex-direction: column;
}

.canvas {
  flex: 1;
}

.hscroll {
  display: flex;
  align-items: center;
  justify-content: space-between;
  height: 15px;
  padding: 0 5px;
  background: #dadada;
}

.vside {
  display: flex;
  flex-direction: column;
  width: 15px;
  margin: 0 0 16px 1px;
  gap: 1px;
}

.vscroll {
  display: flex;
  flex: 1;
  flex-direction: column;
  align-items: center;
  justify-content: space-between;
  padding: 5px 0;
  background: #dadada;
}

.vside button {
  height: 16px;
  border-radius: 2px;
  background: #dadada;
}

.pdf-status {
  display: flex;
  align-items: center;
  height: 25px;
  padding: 0 4px 0 10px;
  border-top: 1px solid #cfcfcf;
  color: #999;
}

.pdf-status > button {
  width: 24px;
}

.page-no {
  width: 32px;
  height: 22px;
  margin: 0 12px 0 6px;
  padding: 0;
  border: 1px solid #e0e0e0;
  border-radius: 4px;
}

.status-right {
  display: flex;
  align-items: center;
  margin-left: auto;
}

.status-right button {
  width: 32px;
}

.status-right .gap {
  margin-right: 8px;
}

.status-right span {
  margin-left: 9px;
}

.status-right > svg {
  margin-left: 11px;
}

.slider {
  width: 88px;
  height: 12px;
  margin: 0 5px;
  appearance: none;
  background: linear-gradient(#dedede, #dedede) center / 100% 2px no-repeat;
}

.slider::-webkit-slider-thumb {
  width: 10px;
  height: 10px;
  appearance: none;
  border: 1px solid #bdbdbd;
  border-radius: 50%;
  background: #fff;
}

.taskbar {
  display: grid;
  grid-template-columns: 1fr auto 1fr;
  height: 48px;
  padding-bottom: 2px;
  border-top: 1px solid #a9b8a4;
  background: linear-gradient(
    90deg,
    #d6edbb 0%,
    #d5ecb8 11%,
    #dbe8bb 15%,
    #d5ecb3 22%,
    #d9e8c0 28%,
    #d4e9c3 32%,
    #e9e6ae 38%,
    #dfee9f 46%,
    #e6ec9f 50%,
    #f3e8b8 53%,
    #f9ebd0 57%,
    #fbebdd 62%,
    #f2ede8 68%,
    #dff3f0 72%,
    #c9f4ee 76%,
    #d4f8f6 85%,
    #bef0ed 91%,
    #c2f0ec 100%
  );
}

.apps {
  display: flex;
  align-items: center;
}

.app {
  width: 44px;
  height: 44px;
}

.search {
  display: flex;
  align-items: center;
  width: 218px;
  height: 31px;
  margin: 0 4px 0 3px;
  padding: 0 8px 0 11px;
  border: 1px solid #cfd4ae;
  border-radius: 16px;
  background: #f8f9e9;
}

.search input {
  flex: 1;
  min-width: 0;
  padding: 0 0 0 10px;
  border: 0;
  background: none;
  font: 14px/20px "Noto Sans CJK KR", sans-serif;
}

.search input::placeholder {
  color: #5d5f52;
  opacity: 1;
}

.window {
  position: relative;
  gap: 8px;
  width: 80px;
  height: 39px;
  margin: 0 3px;
  border: 1px solid transparent;
  border-radius: 4px;
  color: #1a1a1a;
}

.window::after {
  content: "";
  position: absolute;
  bottom: 0;
  left: 15px;
  width: 6px;
  height: 3px;
  border-radius: 2px;
  background: #8f8a82;
}

.window.focused {
  border-color: #e8e8e8;
  background: #f8f8f8;
}

.window.focused::after {
  left: 10px;
  width: 16px;
  background: #0a78d4;
}

.tray {
  display: flex;
  align-items: center;
  justify-content: flex-end;
  padding-right: 19px;
}

.tray time {
  margin-left: 12px;
  padding-bottom: 2px;
  text-align: right;
  line-height: 17px;
}

.t1 {
  width: 34px;
}

.t2 {
  width: 31px;
}

.t3 {
  width: 25px;
}

.t2 + .t3 {
  margin-left: 3px;
}

.host-status {
  display: flex;
  align-items: center;
  height: 20px;
  padding-left: 1px;
  background: #e4e5e7;
}

.host-status p {
  flex: 1;
  font-size: 13px;
}

.host-status i {
  display: flex;
  justify-content: center;
  width: 21px;
}

.host-status .rule {
  height: 16px;
  margin: 0 6px 0 5px;
  background: #808285;
}

.grip {
  align-self: flex-end;
  margin-left: 7px;
}
</style>
